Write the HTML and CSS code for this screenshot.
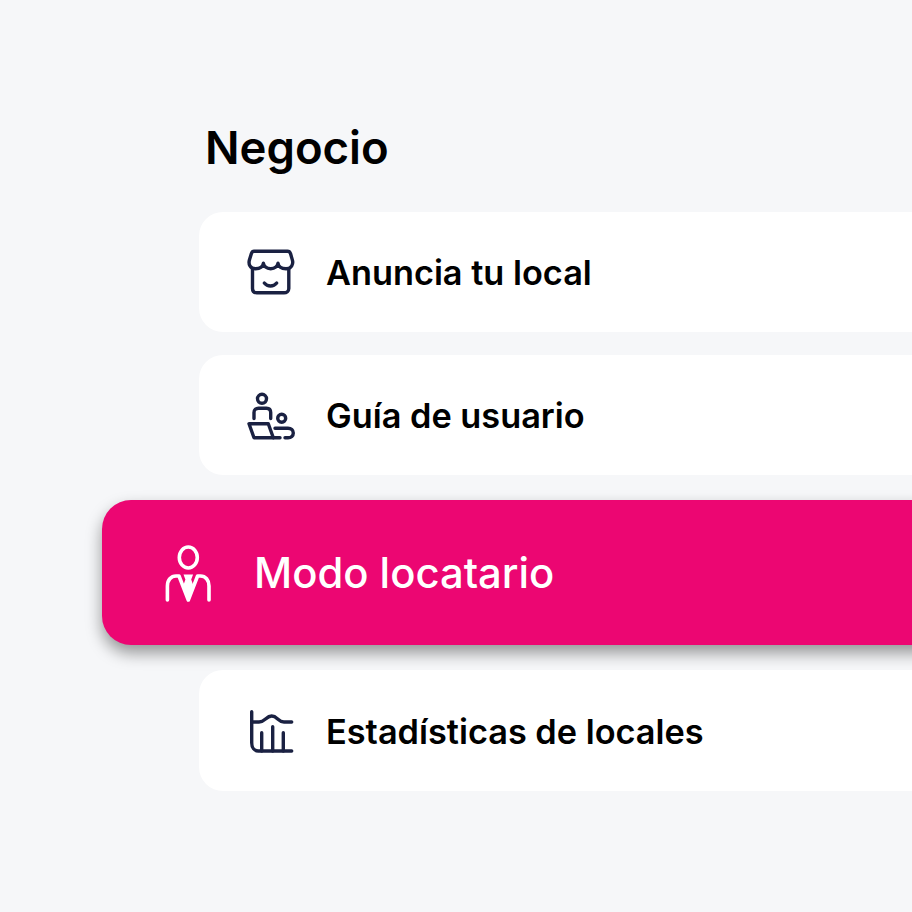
FILE: index.html
```html
<!DOCTYPE html>
<html lang="es">
  <head>
    <meta charset="UTF-8" />
    <meta name="viewport" content="width=device-width, initial-scale=1.0" />
    <title>Negocio</title>
    <link rel="stylesheet" href="styles.css">
  </head>
  <body>
    <main class="panel">
      <h1 class="panel-title">Negocio</h1>

      <ul class="menu">
        <li class="menu-item">
          <svg class="menu-icon" viewBox="0 0.5 48 48">
            <path d="M7 2.7H40.5C42 2.7 43 3.6 43.5 5L45.4 11.6C46.4 15 45 20.3 39 20.3C34 20.3 31.3 17.5 31 14.8C30.7 17.5 28 20.3 23.7 20.3C19.4 20.3 16.7 17.5 16.4 14.8C16.1 17.5 13.4 20.3 8.5 20.3C2.6 20.3 1.4 15 2.4 11.6L4.4 5C4.9 3.6 5.5 2.7 7 2.7Z" />
            <path d="M5.5 20V40C5.5 42.6 7.2 44.3 9.8 44.3H37C39.6 44.3 41.8 42.6 41.8 40V20" />
            <path d="M17.3 34.5C20.5 38.5 26.5 38.5 29.7 34.5" />
          </svg>
          <span>Anuncia tu local</span>
        </li>

        <li class="menu-item">
          <svg class="menu-icon" viewBox="0 -1.5 48 48">
            <circle cx="15" cy="5.3" r="4.5" />
            <path d="M7 25V19C7 16.3 9 14.7 11.5 14.7H19.5C22 14.7 23.7 16.3 23.7 19V25" />
            <path d="M2 30.3H21.3L26.3 44.3H7Z" />
            <path d="M26.3 44.3H33" />
            <circle cx="34.7" cy="24.7" r="4" />
            <path d="M28 34.7H41C44.2 34.7 46.3 36.6 46.3 39.5C46.3 42.4 44.2 44.3 41 44.3H38" />
          </svg>
          <span>Guía de usuario</span>
        </li>

        <li class="menu-item menu-item-active">
          <svg class="menu-icon" viewBox="0 0 50 58">
            <ellipse cx="25.3" cy="13.5" rx="9" ry="10.5" />
            <path d="M4.4 56V42C4.4 36 8 32 13 32H16L25.3 56L34.6 32H37.5C42.5 32 46 36 46 42V56" />
            <path class="menu-icon-fill" d="M20.5 30.5H30.1L28.2 35.5L30.5 42L25.3 57L20.1 42L22.4 35.5Z" />
          </svg>
          <span>Modo locatario</span>
        </li>

        <li class="menu-item">
          <svg class="menu-icon" viewBox="0 -1 48 48">
            <path d="M4.7 2.7V33.7C4.7 38.8 7.5 42 11.3 42H44.7" />
            <path d="M4.7 13H12C18 13 19 7 24.7 7C30.4 7 31 13 37 13H44.7" />
            <path d="M14.7 23.7V42M25.7 17.7V42M36.3 23.7V42" />
          </svg>
          <span>Estadísticas de locales</span>
        </li>
      </ul>
    </main>
  </body>
</html>
```

FILE: styles.css
```css
* {
  box-sizing: border-box;
}
html,
body {
  height: 100%;
}
body {
  margin: 0;
  overflow: hidden;
  background-color: #f6f7f9;
  font-family: Inter, "Liberation Sans", sans-serif;
  color: #000;
}
.panel {
  padding: 118px 0 0 199px;
}
.panel-title {
  margin: 0 0 34px 6px;
  font-size: 45.5px;
  line-height: 60px;
  font-weight: 600;
}
.menu {
  display: flex;
  flex-direction: column;
  gap: 23px;
  margin: 0 -40px 0 0;
  padding: 0;
  list-style: none;
}
.menu-item {
  display: flex;
  align-items: center;
  gap: 31px;
  height: 120px;
  padding: 1px 0 0 48px;
  background-color: #fff;
  border-radius: 24px;
  font-size: 34.3px;
  font-weight: 600;
}
.menu-item:last-child {
  height: 121px;
  padding-top: 2px;
}
.menu-icon {
  width: 48px;
  height: 48px;
  flex-shrink: 0;
  fill: none;
  stroke: #1a2142;
  stroke-width: 3.4;
  stroke-linecap: round;
  stroke-linejoin: round;
}
.menu-item-active {
  height: 145px;
  margin: 2px 0 2px -97px;
  padding: 0 0 0 61px;
  gap: 41px;
  background-color: #ec0672;
  border-radius: 29px;
  box-shadow: 0 8px 16px rgba(0, 0, 0, 0.4);
  font-size: 41.8px;
  font-weight: 500;
  color: #fff;
}
.menu-item-active .menu-icon {
  width: 50px;
  height: 58px;
  stroke: #fff;
  stroke-width: 3.6;
}
.menu-item-active .menu-icon-fill {
  fill: #fff;
  stroke: none;
}
```
